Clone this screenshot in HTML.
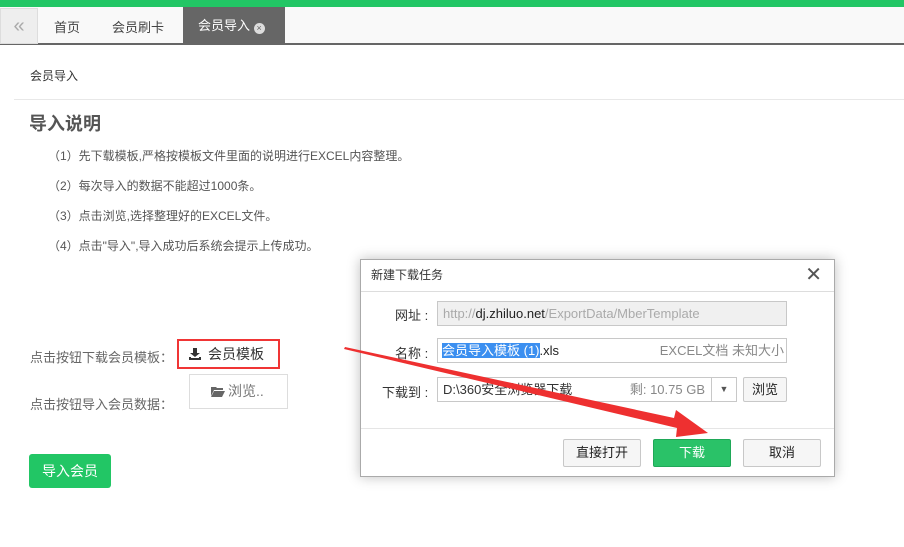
<!DOCTYPE html><html><head><meta charset="utf-8"><style>
*{margin:0;padding:0;box-sizing:border-box}
body{width:904px;height:547px;background:#fff;font-family:"Liberation Sans","Noto Sans CJK SC",sans-serif;position:relative;overflow:hidden;color:#333}
.a{position:absolute;white-space:nowrap}
.inp{position:absolute;border:1px solid #c8c8c8;height:25px;font-size:13px;line-height:23px;padding-left:5px}
.btn{position:absolute;border:1px solid #c8c8c8;background:#f6f6f6;font-size:13px;text-align:center;line-height:26px;border-radius:2px;color:#222}
</style></head><body>
<div class="a" style="left:0;top:0;width:904px;height:7px;background:#22c665"></div>
<div class="a" style="left:0;top:7px;width:904px;height:38px;background:#f9f9f9;border-bottom:2px solid #666"></div>
<div class="a" style="left:0;top:8px;width:38px;height:36px;background:#eee;border:1px solid #ddd;color:#aaa;font-size:20px;text-align:center;line-height:34px">«</div>
<div class="a" style="left:54px;top:17px;font-size:13px;color:#444">首页</div>
<div class="a" style="left:112px;top:17px;font-size:13px;color:#444">会员刷卡</div>
<div class="a" style="left:183px;top:7px;width:102px;height:38px;background:#666;color:#fff;font-size:13px;line-height:38px;padding-left:15px">会员导入 <span style="display:inline-block;width:11px;height:11px;border-radius:50%;background:#ddd;color:#666;font-size:9px;line-height:11px;text-align:center;vertical-align:-1px">×</span></div>
<div class="a" style="left:30px;top:67px;font-size:12px;color:#333">会员导入</div>
<div class="a" style="left:14px;top:99px;width:890px;height:1px;background:#e8e8e8"></div>
<div class="a" style="left:29px;top:110px;font-size:18px;font-weight:bold;color:#555">导入说明</div>
<div class="a" style="left:48px;top:141px;font-size:12px;color:#555;line-height:30px">（1）先下载模板,严格按模板文件里面的说明进行EXCEL内容整理。<br>（2）每次导入的数据不能超过1000条。<br>（3）点击浏览,选择整理好的EXCEL文件。<br>（4）点击"导入",导入成功后系统会提示上传成功。</div>
<div class="a" style="left:30px;top:347px;font-size:13px;color:#666">点击按钮下载会员模板：</div>
<div class="a" style="left:30px;top:394px;font-size:13px;color:#666">点击按钮导入会员数据：</div>
<div class="a" style="left:177px;top:339px;width:103px;height:30px;border:2px solid #f03535;font-size:14px;line-height:26px;padding-left:10px;color:#333"><svg width="12" height="12" viewBox="0 0 12 12" style="vertical-align:-1px;margin-right:7px"><path d="M4 0h4v5h3L6 9 1 5h3z M0 9h2v1h8V9h2v3H0z" fill="#333"/></svg>会员模板</div>
<div class="a" style="left:189px;top:374px;width:99px;height:35px;border:1px solid #ddd;font-size:14px;line-height:33px;padding-left:21px;color:#777"><svg width="14" height="11" viewBox="0 0 14 11" style="vertical-align:-1px;margin-right:3px"><path d="M0 1h5l1 1h6v2H3L0 10z M3 5h11l-3 6H0z" fill="#666"/></svg>浏览..</div>
<div class="a" style="left:29px;top:454px;width:82px;height:34px;background:#22c665;border-radius:3px;color:#fff;font-size:14px;text-align:center;line-height:34px">导入会员</div>

<div class="a" style="left:360px;top:259px;width:475px;height:218px;background:#fff;border:1px solid #aaa;box-shadow:0 0 12px rgba(0,0,0,.25)">
<div class="a" style="left:0;top:0;width:473px;height:32px;border-bottom:1px solid #ddd;font-size:12px;line-height:30px;padding-left:10px;color:#333">新建下载任务<span style="position:absolute;right:12px;top:0;font-size:20px;color:#555;font-weight:300">✕</span></div>
<div class="a" style="left:34px;top:45px;font-size:13px">网址 :</div>
<div class="a" style="left:34px;top:83px;font-size:13px">名称 :</div>
<div class="a" style="left:21px;top:122px;font-size:13px">下载到 :</div>
<div class="inp" style="left:76px;top:41px;width:350px;background:#f0f0f0;color:#aaa">http://<span style="color:#222">dj.zhiluo.net</span>/ExportData/MberTemplate</div>
<div class="inp" style="left:76px;top:78px;width:350px;color:#222;padding-left:4px"><span style="background:#3b8ff0;color:#fff">会员导入模板 (1)</span>.xls<span style="position:absolute;right:2px;color:#888">EXCEL文档 未知大小</span></div>
<div class="inp" style="left:76px;top:117px;width:275px;color:#333">D:\360安全浏览器下载<span style="position:absolute;right:6px;color:#888">剩: 10.75 GB</span></div>
<div class="inp" style="left:350px;top:117px;width:26px;text-align:center;padding:0;font-size:9px;color:#555">▼</div>
<div class="btn" style="left:382px;top:117px;width:44px;height:25px;line-height:23px">浏览</div>
<div class="a" style="left:0;top:168px;width:473px;height:1px;background:#e5e5e5"></div>
<div class="btn" style="left:202px;top:179px;width:78px;height:28px">直接打开</div>
<div class="btn" style="left:292px;top:179px;width:78px;height:28px;background:#2ac268;border-color:#1fa858;color:#fff">下载</div>
<div class="btn" style="left:382px;top:179px;width:78px;height:28px">取消</div>
</div>
<svg class="a" style="left:0;top:0" width="904" height="547"><polygon points="345,347 674,418 676,410 708,433 676,437 677,428 344,349" fill="#ee3030"/></svg>
</body></html>
